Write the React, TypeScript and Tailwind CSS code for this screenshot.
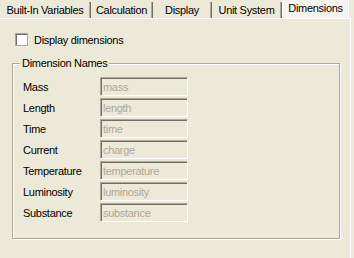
const tabs = [
  { label: 'Built-In Variables', w: 'w-[91px]' },
  { label: 'Calculation', w: 'w-[62px]' },
  { label: 'Display', w: 'w-[59px]' },
  { label: 'Unit System', w: 'w-[70px]' },
];

const dims = [
  ['Mass', 'mass'],
  ['Length', 'length'],
  ['Time', 'time'],
  ['Current', 'charge'],
  ['Temperature', 'temperature'],
  ['Luminosity', 'luminosity'],
  ['Substance', 'substance'],
];

export default function App() {
  return (
    <div
      className="w-[354px] h-[258px] bg-[#ece9d8] text-[11px] tracking-[-0.3px] text-black overflow-hidden flex flex-col"
      style={{ fontFamily: '"Liberation Sans", Arial, sans-serif' }}
    >
      {/* Tab strip */}
      <div className="flex h-[18px] items-end">
        {tabs.map(t => (
          <div
            key={t.label}
            className={`${t.w} h-[16px] flex items-center justify-center border-r border-[#716f64] shadow-[inset_-1px_0_0_#aca899] leading-none`}
          >
            {t.label}
          </div>
        ))}
        <div className="w-[67px] h-[18px] flex items-start justify-center pt-[3px] bg-[#f5f4ec] border-l border-white border-r border-[#716f64] leading-none">
          Dimensions
        </div>
      </div>

      {/* Page */}
      <div className="w-[351px] flex-1 border-t border-white border-r border-[#716f64] px-[12px] pt-[14px]">
        <label className="flex items-center gap-[6px] ml-[3px] h-[13px]">
          <span className="w-[13px] h-[13px] bg-white border border-[#aca899] shadow-[inset_1px_1px_0_#716f64]" />
          <span className="leading-none pt-[1px]">Display dimensions</span>
        </label>

        <div className="relative mt-[17px] w-[328px] h-[176px] border border-[#aca899] shadow-[inset_1px_1px_0_white,1px_1px_0_white] pt-[13px] pl-[10px]">
          <span className="absolute left-[7px] top-[-6px] px-[2px] bg-[#ece9d8] leading-none">Dimension Names</span>
          <div className="flex flex-col gap-[2px]">
            {dims.map(([name, value]) => (
              <div key={name} className="flex items-center h-[19px]">
                <span className="w-[77px] pt-[1px]">{name}</span>
                <div className="w-[88px] h-[19px] flex items-center pl-[2px] pt-[1px] border-t border-l border-[#aca899] border-b border-r border-b-white border-r-white shadow-[inset_1px_1px_0_#716f64] text-[#aca899] leading-none">
                  {value}
                </div>
              </div>
            ))}
          </div>
        </div>
      </div>
    </div>
  );
}
